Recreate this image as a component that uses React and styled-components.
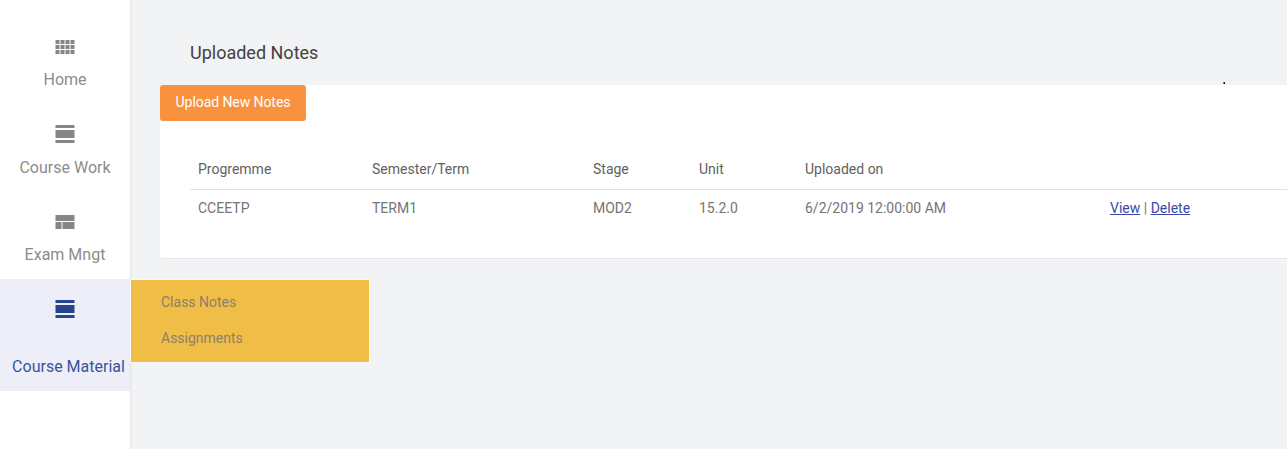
import React from "react";
import styled, { createGlobalStyle } from "styled-components";

const GlobalStyle = createGlobalStyle`
  * { box-sizing: border-box; }
  body {
    margin: 0;
    background: #f2f3f5;
    font-family: Roboto, "Liberation Sans", sans-serif;
    font-size: 14px;
    color: #757575;
    overflow: hidden;
  }
`;

const Page = styled.div`
  display: flex;
  height: 449px;
  overflow: hidden;
`;

const Sidebar = styled.nav`
  flex: none;
  width: 130px;
  padding-top: 16.5px;
  background: #fff;
  box-shadow: 0 0 3px rgba(0, 0, 0, 0.14);
`;

const NavItem = styled.div`
  position: relative;
  display: flex;
  flex-direction: column;
  align-items: center;
  height: ${(p) => (p.$active ? 112 : 87.5)}px;
  padding-top: 20.5px;
  color: ${(p) => (p.$active ? "#26468b" : "#868686")};
  background: ${(p) => (p.$active ? "#eeeef8" : "transparent")};
`;

const NavIcon = styled.svg`
  flex: none;
  display: block;
  width: 20px;
  height: 18px;
  fill: currentColor;
`;

const NavLabel = styled.span`
  margin-top: ${(p) => (p.$active ? 39 : 15)}px;
  padding-left: ${(p) => (p.$active ? 7 : 0)}px;
  font-size: 16px;
  line-height: 20px;
  white-space: nowrap;
  color: ${(p) => (p.$active ? "#3a539b" : "#8c8c8c")};
`;

const Submenu = styled.div`
  position: absolute;
  top: 0;
  left: 130px;
  width: 240px;
  height: 84px;
  padding: 4px 0 5px 30px;
  border: 1px solid #fafafa;
  background: #f0bd47;
`;

const SubmenuItem = styled.div`
  font-size: 14px;
  line-height: 36px;
  height: 36px;
  color: #8c8069;
`;

const Content = styled.main`
  flex: 1;
  min-width: 0;
  padding-left: 30px;
`;

const Header = styled.header`
  display: flex;
  justify-content: space-between;
  height: 85px;
  padding: 41px 62px 0 30px;
`;

const Title = styled.h1`
  margin: 0;
  font-size: 18px;
  font-weight: 400;
  line-height: 24px;
  color: #424242;
`;

const Dot = styled.i`
  align-self: flex-end;
  width: 2px;
  height: 2px;
  margin-bottom: 1px;
  background: linear-gradient(90deg, #777 50%, #111 50%);
`;

const Card = styled.section`
  width: 1150px;
  height: 174px;
  background: #fff;
  border-bottom: 1px solid #e3e5e8;
  border-radius: 3px;
`;

const UploadButton = styled.button`
  display: block;
  width: 146px;
  height: 36px;
  padding: 0 0 2px;
  border: 0;
  border-radius: 3px;
  background: #f9923f;
  color: #fff;
  font: 400 14px Roboto, "Liberation Sans", sans-serif;
  letter-spacing: -0.07px;
`;

const Table = styled.div`
  margin: 29px 0 0 30px;
`;

const Row = styled.div`
  display: grid;
  grid-template-columns: 174px 221px 106px 106px 305px 200px;
  height: 38px;
  padding-left: 8px;
  line-height: 36px;
  white-space: nowrap;
`;

const HeadRow = styled(Row)`
  height: 40px;
  line-height: 38px;
  color: #616161;
  border-bottom: 1px solid #dee2e2;
`;

const Link = styled.a`
  color: #3949ab;
  text-decoration: underline;
`;

const DayIcon = () => (
  <NavIcon viewBox="0 0 20 18">
    <path d="M.5 0h19v3H.5zM.5 5h19v8H.5zM.5 15h19v3H.5z" />
  </NavIcon>
);

const GridIcon = () => (
  <NavIcon viewBox="0 0 20 18">
    {[3, 8, 13].map((y) =>
      [0.5, 5.5, 10.5, 15.5].map((x) => (
        <rect key={`${x}-${y}`} x={x} y={y} width="4" height="4" />
      ))
    )}
  </NavIcon>
);

const CompactIcon = () => (
  <NavIcon viewBox="0 0 20 18">
    <path d="M.5 3h19v6H.5zM.5 10h6v7H.5zM7.5 10h12v7h-12z" />
  </NavIcon>
);

const items = [
  { label: "Home", Icon: GridIcon },
  { label: "Course Work", Icon: DayIcon },
  { label: "Exam Mngt", Icon: CompactIcon },
  { label: "Course Material", Icon: DayIcon, submenu: ["Class Notes", "Assignments"] },
];

const columns = ["Progremme", "Semester/Term", "Stage", "Unit", "Uploaded on"];
const note = ["CCEETP", "TERM1", "MOD2", "15.2.0", "6/2/2019 12:00:00 AM"];

export default function App() {
  return (
    <>
      <GlobalStyle />
      <Page>
        <Sidebar>
          {items.map(({ label, Icon, submenu }) => (
            <NavItem key={label} $active={!!submenu}>
              <Icon />
              <NavLabel $active={!!submenu}>{label}</NavLabel>
              {submenu && (
                <Submenu>
                  {submenu.map((s) => (
                    <SubmenuItem key={s}>{s}</SubmenuItem>
                  ))}
                </Submenu>
              )}
            </NavItem>
          ))}
        </Sidebar>
        <Content>
          <Header>
            <Title>Uploaded Notes</Title>
            <Dot />
          </Header>
          <Card>
            <UploadButton>Upload New Notes</UploadButton>
            <Table>
              <HeadRow>
                {columns.map((c) => (
                  <span key={c}>{c}</span>
                ))}
              </HeadRow>
              <Row>
                {note.map((v) => (
                  <span key={v}>{v}</span>
                ))}
                <span>
                  <Link>View</Link> | <Link>Delete</Link>
                </span>
              </Row>
            </Table>
          </Card>
        </Content>
      </Page>
    </>
  );
}
